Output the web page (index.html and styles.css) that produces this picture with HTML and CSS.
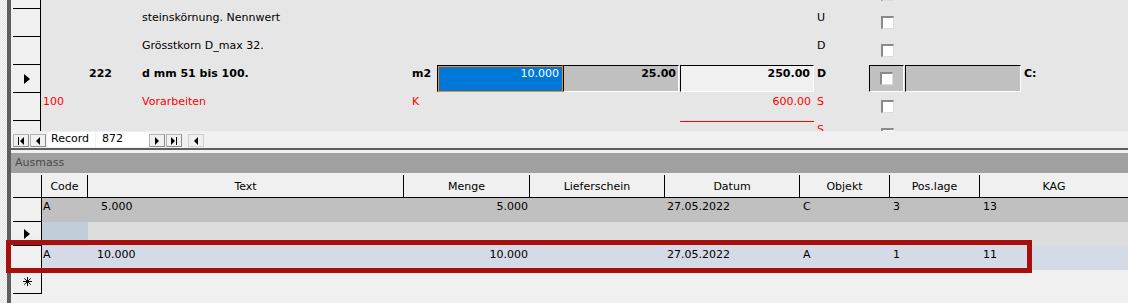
FILE: index.html
```html
<!DOCTYPE html>
<html lang="de">
  <head>
    <meta charset="utf-8" />
    <title>Ausmass</title>
    <link rel="stylesheet" href="styles.css">
  </head>
  <body>
    <div class="app">
      <div class="desk"></div>

      <div class="main">
        <!-- Main form: continuous rows -->
        <div class="form">
          <div class="form-rows">
            <div class="frow">
              <div class="sel"></div>
              <div class="pos"></div><div></div><div class="txt"></div><div class="unit"></div>
              <div></div><div></div><div class="total"></div><div class="code"></div>
              <div class="chk"><span class="checkbox"></span></div>
              <div></div><div></div>
            </div>
            <div class="frow">
              <div class="sel"></div>
              <div class="pos"></div><div></div>
              <div class="txt">steinskörnung. Nennwert</div>
              <div class="unit"></div><div></div><div></div><div class="total"></div>
              <div class="code">U</div>
              <div class="chk"><span class="checkbox"></span></div>
              <div></div><div></div>
            </div>
            <div class="frow">
              <div class="sel"></div>
              <div class="pos"></div><div></div>
              <div class="txt">Grösstkorn D_max 32.</div>
              <div class="unit"></div><div></div><div></div><div class="total"></div>
              <div class="code">D</div>
              <div class="chk"><span class="checkbox"></span></div>
              <div></div><div></div>
            </div>
            <div class="frow current">
              <div class="sel">
                <svg width="6" height="10" viewBox="0 0 6 10"><polygon points="0,0 6,5 0,10" fill="#000"/></svg>
              </div>
              <div class="pos num">222</div><div></div>
              <div class="txt">d mm 51 bis 100.</div>
              <div class="unit">m2</div>
              <div class="field qty active">10.000</div>
              <div class="field price">25.00</div>
              <div class="field total">250.00</div>
              <div class="code">D</div>
              <div class="field chk"><span class="checkbox"></span></div>
              <div class="field box"></div>
              <div class="rest">C:</div>
            </div>
            <div class="frow red">
              <div class="sel"></div>
              <div class="pos">100</div><div></div>
              <div class="txt">Vorarbeiten</div>
              <div class="unit">K</div>
              <div></div><div></div>
              <div class="total">600.00</div>
              <div class="code">S</div>
              <div class="chk"><span class="checkbox"></span></div>
              <div></div><div></div>
            </div>
            <div class="frow red">
              <div class="sel"></div>
              <div class="pos"></div><div></div><div class="txt"></div><div class="unit"></div>
              <div></div><div></div>
              <div class="total sum-line"></div>
              <div class="code">S</div>
              <div class="chk"><span class="checkbox"></span></div>
              <div></div><div></div>
            </div>
          </div>
        </div>

        <!-- Record navigation -->
        <div class="nav">
          <span class="nav-btn">
            <svg width="7" height="8" viewBox="0 0 7 8"><rect x="0" y="0" width="1" height="8"/><polygon points="6,0 2,4 6,8"/></svg>
          </span>
          <span class="nav-btn">
            <svg width="4" height="8" viewBox="0 0 4 8"><polygon points="4,0 0,4 4,8"/></svg>
          </span>
          <span class="nav-label">Record</span>
          <span class="nav-input">872</span>
          <span class="nav-btn">
            <svg width="4" height="8" viewBox="0 0 4 8"><polygon points="0,0 4,4 0,8"/></svg>
          </span>
          <span class="nav-btn">
            <svg width="7" height="8" viewBox="0 0 7 8"><polygon points="0,0 4,4 0,8"/><rect x="5" y="0" width="1" height="8"/></svg>
          </span>
          <span class="nav-btn scroll">
            <svg width="4" height="8" viewBox="0 0 4 8"><polygon points="4,0 0,4 4,8"/></svg>
          </span>
          <span class="scroll-track"></span>
        </div>

        <div class="divider"></div>

        <!-- Subform: Ausmass -->
        <div class="subform-title">Ausmass</div>
        <div class="grid">
          <div class="grow head">
            <div class="sel"></div>
            <div>Code</div>
            <div>Text</div>
            <div>Menge</div>
            <div>Lieferschein</div>
            <div>Datum</div>
            <div>Objekt</div>
            <div>Pos.lage</div>
            <div class="last">KAG</div>
          </div>
          <div class="grow saved">
            <div class="sel"></div>
            <div>A</div>
            <div class="text-a">5.000</div>
            <div class="right">5.000</div>
            <div></div>
            <div>27.05.2022</div>
            <div>C</div>
            <div>3</div>
            <div>13</div>
          </div>
          <div class="grow editing">
            <div class="sel">
              <svg width="6" height="10" viewBox="0 0 6 10"><polygon points="0,0 6,5 0,10" fill="#000"/></svg>
            </div>
            <div class="focus"></div>
            <div></div><div></div><div></div><div></div><div></div><div></div><div></div>
          </div>
          <div class="grow picked">
            <div class="sel"></div>
            <div>A</div>
            <div class="text-b">10.000</div>
            <div class="right">10.000</div>
            <div></div>
            <div>27.05.2022</div>
            <div>A</div>
            <div>1</div>
            <div>11</div>
          </div>
          <div class="grow blank">
            <div class="sel">
              <svg width="9" height="9" viewBox="0 0 9 9"><path d="M4.5 0V9M0 4.5H9M1.3 1.3L7.7 7.7M7.7 1.3L1.3 7.7" stroke="#000" stroke-width="1"/></svg>
            </div>
            <div></div><div></div><div></div><div></div><div></div><div></div><div></div><div></div>
          </div>
        </div>
      </div>

      <!-- annotation frame over the picked row -->
      <div class="mark"></div>
    </div>
  </body>
</html>
```

FILE: styles.css
```css
/* Page base */
body {
  margin: 0;
  overflow: hidden;
  background: #f0f0f0;
  font-family: "DejaVu Sans", sans-serif;
  font-size: 11px;
  color: #000;
}

.app {
  position: relative;
  display: flex;
  height: 303px;
}

/* dotted window background on the far left */
.desk {
  width: 7px;
  flex: none;
  background: repeating-conic-gradient(#e2e2e2 0 25%, #f7f7f7 0 50%) 0 0 / 2px 2px;
}

.main {
  flex: 1;
  min-width: 0;
  border-left: 4px solid #5e5e5e;
  padding-left: 2px;
  background: #f0f0f0;
}

/* --- Main form --- */
.form {
  height: 131px;
  overflow: hidden;
  background: #e6e6e6;
}
.form-rows {
  margin-top: -19px;
}
.frow {
  display: grid;
  grid-template-columns: 28px 75px 22px 270px 29px 126px 117px 134px 55px 36px 116px 1fr;
  height: 28px;
  line-height: 14px;
}
.frow > div {
  box-sizing: border-box;
  padding-top: 2px;
  white-space: nowrap;
  height: 27px;
}
.frow > .sel {
  height: 28px;
  padding: 0;
  background: #f0f0f0;
  border-right: 1px solid #000;
  border-bottom: 1px solid #000;
  display: flex;
  align-items: center;
  justify-content: center;
}
.frow .pos { padding-left: 2px; }
.frow .pos.num { text-align: right; padding-right: 4px; }
.frow .txt { padding-left: 4px; }
.frow .unit { padding-left: 4px; }
.frow .total { text-align: right; padding-right: 3px; }
.frow .code { padding-left: 3px; }
.frow .rest { padding-left: 3px; }
.frow .chk {
  padding-top: 7px;
  display: flex;
  justify-content: center;
  align-items: flex-start;
}

.current { font-weight: bold; }
.red { color: #ff0000; }
.sum-line { border-top: 1px solid #ff0000; }

/* sunken fields of the current record */
.frow > .field {
  border-top: 1px solid #000;
  border-left: 1px solid #000;
  border-right: 1px solid #fff;
  border-bottom: 1px solid #fff;
  background: #c0c0c0;
  text-align: right;
  padding-top: 1px;
  padding-right: 2px;
}
.frow > .field.qty {
  font-weight: normal;
  color: #fff;
  background: #0078d7;
  border-right-color: #f08a24;
  border-bottom-color: #f08a24;
  box-shadow: inset 1px 1px 0 #f08a24;
  padding-right: 3px;
}
.frow > .field.price { width: 116px; }
.frow > .field.total {
  background: #f0f0f0;
  padding-right: 3px;
}
.frow > .field.chk {
  width: 35px;
  padding-top: 6px;
  padding-right: 0;
}

.checkbox {
  display: block;
  box-sizing: border-box;
  width: 13px;
  height: 13px;
  background: #fff;
  border-top: 2px solid #8a8a8a;
  border-left: 2px solid #8a8a8a;
  border-right: 1px solid #dcdcdc;
  border-bottom: 1px solid #dcdcdc;
}

/* --- Record navigation bar --- */
.nav {
  display: flex;
  align-items: flex-start;
  height: 16px;
  padding-top: 1px;
  box-sizing: border-box;
  background: #f0f0f0;
}
.nav-btn {
  box-sizing: border-box;
  width: 16px;
  height: 13px;
  margin-top: 2px;
  margin-right: 1px;
  background: #f0f0f0;
  border: 1px solid #8c8c8c;
  border-top-color: #b4b4b4;
  border-left-color: #b4b4b4;
  display: flex;
  align-items: center;
  justify-content: center;
}
.nav-btn.scroll {
  margin-left: 5px;
  border-color: #d0d0d0;
}
.nav-label,
.nav-input {
  height: 15px;
  line-height: 14px;
  background: #fff;
}
.nav-label {
  width: 48px;
  padding-left: 4px;
  box-sizing: border-box;
  margin-right: 1px;
}
.nav-input {
  width: 53px;
  padding-left: 6px;
  box-sizing: border-box;
}
.scroll-track {
  flex: 1;
  height: 15px;
  background: #f0f0f0;
}

.divider {
  height: 2px;
  margin: 1px 0 3px -2px;
  background: #5e5e5e;
}

/* --- Subform --- */
.subform-title {
  height: 20px;
  line-height: 20px;
  margin-left: -2px;
  padding-left: 4px;
  background: #a0a0a0;
  color: #4a4a4a;
}

.grid {
  margin-top: 2px;
}
.grow {
  display: grid;
  grid-template-columns: 29px 46px 316px 126px 135px 135px 90px 90px 1fr;
  height: 24px;
  line-height: 14px;
}
.grow > div {
  box-sizing: border-box;
  padding: 2px 0 0 3px;
  white-space: nowrap;
}
.grow > .sel {
  padding: 0;
  background: #f0f0f0;
  border-right: 1px solid #000;
  border-bottom: 1px solid #000;
  display: flex;
  align-items: center;
  justify-content: center;
}
.grow > div:nth-child(2) { padding-left: 1px; }
.grow .text-a { padding-left: 13px; }
.grow .text-b { padding-left: 9px; }
.grow .right { text-align: right; padding: 2px 2px 0 0; }
.grow > div:nth-child(6) { padding-left: 2px; }

.grow.head {
  height: 23px;
  background: #f0f0f0;
}
.grow.head > div {
  padding: 5px 0 0;
  text-align: center;
  border-right: 1px solid #000;
  border-bottom: 1px solid #000;
}
.grow.head > .last { border-right: none; }

.saved { background: #c0c0c0; }
.editing { background: #dcdcdc; }
.editing .focus { background: #c1cdd9; }
.picked { background: #d4dae6; }
.blank { background: #f0f0f0; }
.blank > .sel { align-items: flex-start; padding-top: 7px; }

/* red frame drawn over the screenshot */
.mark {
  position: absolute;
  left: 6px;
  top: 240px;
  width: 1026px;
  height: 33px;
  box-sizing: border-box;
  border: 5px solid #a70f0f;
}
```
